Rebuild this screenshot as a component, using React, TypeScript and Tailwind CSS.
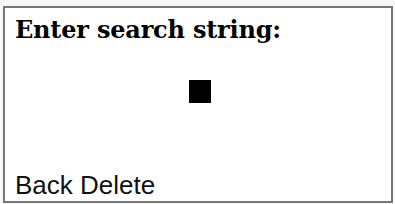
import React from 'react';

const App: React.FC = () => {
  return (
    <div className="w-[395px] h-[204px] bg-[#f7f7f7] pt-[6px] pl-[3px]">
      <div className="w-[390px] h-[197px] border-2 border-[#777777] bg-white flex flex-col">
        <div className="pl-[10px] pt-[6px] font-['DejaVu_Serif',serif] font-bold text-[24px] tracking-[-0.2px] leading-[32px] text-black">
          Enter search string:
        </div>
        <div className="flex-1 flex justify-center pt-[34px] pl-[4px]">
          <div className="w-[22px] h-[23px] bg-black"></div>
        </div>
        <div className="pl-[10px] pb-[2px] font-['Liberation_Sans',Arial,sans-serif] text-[26px] leading-[28px] text-[#111111]">
          Back Delete
        </div>
      </div>
    </div>
  );
};

export default App;
